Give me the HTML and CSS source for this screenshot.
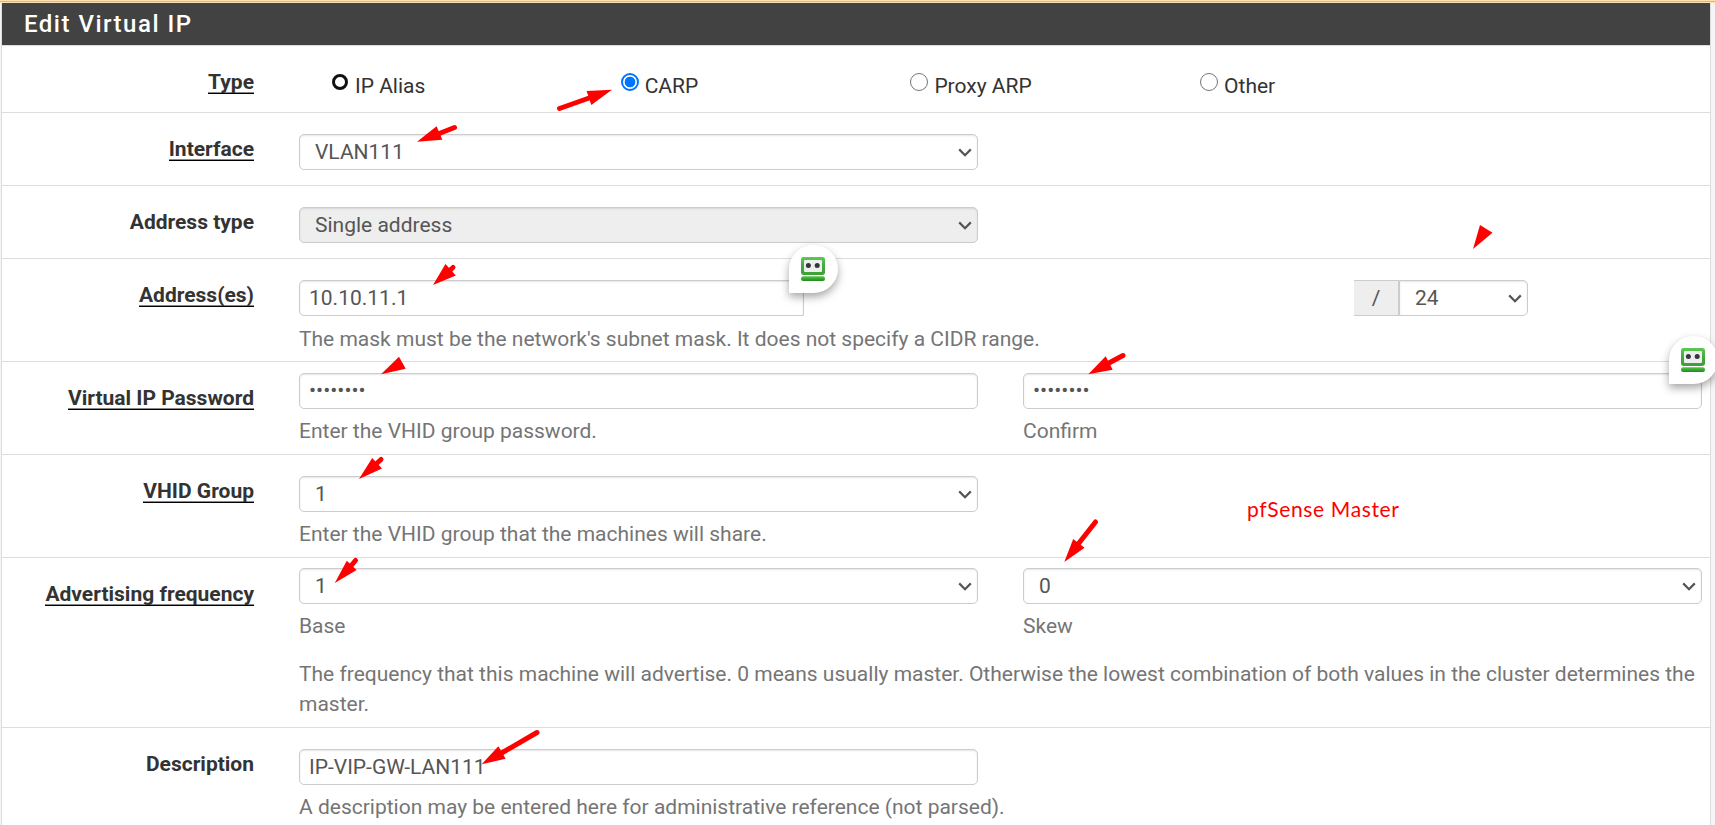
FILE: index.html
```html
<!DOCTYPE html>
<html lang="en">
<head>
<meta charset="utf-8">
<title>Edit Virtual IP</title>
<link rel="stylesheet" href="styles.css">
</head>
<body>
<svg class="defs" width="0" height="0">
  <defs>
    <linearGradient id="green" x1="0" y1="0" x2="0" y2="1"><stop offset="0" stop-color="#5bcb52"/><stop offset=".5" stop-color="#45a83e"/><stop offset="1" stop-color="#3f9f38"/></linearGradient>
    <linearGradient id="green-bar" x1="0" y1="0" x2="0" y2="1"><stop offset="0" stop-color="#55c44c"/><stop offset="1" stop-color="#1f8a19"/></linearGradient>
    <symbol id="robot" viewBox="0 0 24 24">
      <rect width="24" height="18" rx="2.4" fill="url(#green)"/>
      <rect x="3" y="3" width="18" height="12" rx="1" fill="#eee"/>
      <circle cx="7.4" cy="8.6" r="2.5" fill="#33383c"/>
      <circle cx="16.2" cy="8.6" r="2.5" fill="#33383c"/>
      <rect y="19.3" width="24" height="4.7" rx="2.2" fill="url(#green-bar)"/>
    </symbol>
    <symbol id="chevron" viewBox="0 0 14 9"><path d="M1.200 1.400L7 7.200l5.800-5.800" fill="none" stroke="#555" stroke-width="2.200"/></symbol>
  </defs>
</svg>
<div class="strip"></div>
<div class="panel">
  <h2 class="heading">Edit Virtual IP</h2>

  <div class="row row-type">
    <div class="label"><span class="required">Type</span></div>
    <div class="radios">
      <label class="radio"><i class="dot dot-bold"></i><span>IP Alias</span></label>
      <label class="radio"><i class="dot dot-on"></i><span>CARP</span></label>
      <label class="radio"><i class="dot"></i><span>Proxy ARP</span></label>
      <label class="radio"><i class="dot"></i><span>Other</span></label>
    </div>
  </div>

  <div class="row row-plain">
    <div class="label"><span class="required">Interface</span></div>
    <div class="fields"><div class="field"><div class="control select">VLAN111<svg class="chev"><use href="#chevron"/></svg></div></div></div>
  </div>

  <div class="row row-plain">
    <div class="label"><span>Address type</span></div>
    <div class="fields"><div class="field"><div class="control select disabled">Single address<svg class="chev"><use href="#chevron"/></svg></div></div></div>
  </div>

  <div class="row row-help">
    <div class="label"><span class="required">Address(es)</span></div>
    <div class="body">
      <div class="address">
        <div class="control input address-input">10.10.11.1</div>
        <div class="mask"><div class="addon">/</div><div class="control select mask-select">24<svg class="chev"><use href="#chevron"/></svg></div></div>
      </div>
      <p class="help help-low">The mask must be the network's subnet mask. It does not specify a CIDR range.</p>
    </div>
  </div>

  <div class="row row-pass">
    <div class="label"><span class="required">Virtual IP Password</span></div>
    <div class="fields">
      <div class="field"><div class="control input secret">••••••••</div><p class="help">Enter the VHID group password.</p></div>
      <div class="field"><div class="control input secret">••••••••</div><p class="help">Confirm</p></div>
    </div>
  </div>

  <div class="row row-help">
    <div class="label"><span class="required">VHID Group</span></div>
    <div class="fields"><div class="field"><div class="control select">1<svg class="chev"><use href="#chevron"/></svg></div><p class="help">Enter the VHID group that the machines will share.</p></div></div>
  </div>

  <div class="row row-freq">
    <div class="label"><span class="required">Advertising frequency</span></div>
    <div class="body">
      <div class="fields">
        <div class="field"><div class="control select">1<svg class="chev"><use href="#chevron"/></svg></div><p class="help">Base</p></div>
        <div class="field"><div class="control select">0<svg class="chev"><use href="#chevron"/></svg></div><p class="help">Skew</p></div>
      </div>
      <p class="help help-long">The frequency that this machine will advertise. 0 means usually master. Otherwise the lowest combination of both values in the cluster determines the master.</p>
    </div>
  </div>

  <div class="row row-last">
    <div class="label"><span>Description</span></div>
    <div class="fields"><div class="field"><div class="control input">IP-VIP-GW-LAN111</div><p class="help">A description may be entered here for administrative reference (not parsed).</p></div></div>
  </div>
</div>

<div class="badge badge-address"><svg width="24" height="24"><use href="#robot"/></svg></div>
<div class="badge badge-confirm"><svg width="24" height="24"><use href="#robot"/></svg></div>

<svg class="marks" viewBox="0 0 1715 825">
  <g stroke="#f00" stroke-width="5" stroke-linecap="round">
    <path d="M559.500 108.500L592 97"/>
    <path d="M454.500 127.500L438 134"/>
    <path d="M453 267.500L448 272"/>
    <path d="M1123 355.500L1107 364"/>
    <path d="M381 459.500L375 465"/>
    <path d="M355.500 560.500L350 567"/>
    <path d="M1095.500 522L1077 545.500"/>
    <path d="M537 732.500L500 754"/>
  </g>
  <g fill="#f00">
    <path d="M612 89.700L586.600 91L591.300 105z"/>
    <path d="M417 141.700L436.600 126.300L442.400 139.700z"/>
    <path d="M433 285L445.500 264L455.800 275.500z"/>
    <path d="M1473 249L1480 225L1492.500 232.700z"/>
    <path d="M381 374.300L399 356.700L405.700 368.700z"/>
    <path d="M1088.300 374.300L1105.700 356.300L1112.700 369.700z"/>
    <path d="M359 479L372.200 458L382 468.500z"/>
    <path d="M334.800 583L346.800 560.700L356.600 570z"/>
    <path d="M1064.300 562L1073.200 539L1084.600 547.700z"/>
    <path d="M481.600 764.300L498.400 746.300L505.600 758.700z"/>
  </g>
</svg>
<div class="note">pfSense Master</div>
</body>
</html>
```
FILE: styles.css
```css
* { box-sizing: border-box; }

body {
  margin: 0;
  height: 825px;
  overflow: hidden;
  position: relative;
  background: #f5f5f5;
  color: #333;
  font: 21px/30px Roboto, sans-serif;
}

.defs { position: absolute; }

.strip {
  height: 3px;
  background: linear-gradient(#ffe0b2 0 1px, #d9b48c 1px 2px, #ffe0b2 2px 3px);
}

.panel {
  width: 1710px;
  height: 822px;
  overflow: hidden;
  margin-left: 1px;
  border: solid #ddd;
  border-width: 0 1px;
  background: #fff;
}

.heading {
  margin: 0;
  height: 42px;
  padding: 4px 22px;
  background: #424242;
  color: #fff;
  font-size: 24px;
  font-weight: 500;
  line-height: 34px;
  letter-spacing: 1.5px;
}

.row {
  display: flex;
  gap: 45px;
  border-top: 1px solid #ddd;
}
.row-type { height: 67px; }
.row-plain { height: 73px; padding-top: 21px; }
.row-help { height: 103px; padding-top: 21px; }
.row-pass { height: 93px; padding-top: 11px; }
.row-freq { height: 170px; padding-top: 10px; }
.row-last { height: 110px; padding-top: 21px; }

.label {
  width: 252px;
  flex: none;
  text-align: right;
  font-weight: 700;
}
.row-type .label { padding-top: 21px; }
.row-pass .label { padding-top: 10px; }
.row-freq .label { padding-top: 11px; }

.required {
  display: inline-block;
  line-height: 22px;
  border-bottom: 1px solid #000;
  box-shadow: inset 0 -1px #888;
}

.radios { display: flex; padding: 25px 0 0 32px; }
.radio { display: flex; gap: 6px; width: 289.7px; height: 30px; }
.dot {
  width: 18px;
  height: 18px;
  margin-top: 2px;
  border: 1.5px solid #767676;
  border-radius: 50%;
}
.dot-bold { width: 16px; height: 16px; margin: 3px 1px 0; border: 3px solid #111; }
.dot-on {
  border: 2px solid #0075ff;
  background: radial-gradient(circle, #0075ff 5px, #fff 5.7px);
}

.body { width: 1403px; }
.fields { display: flex; gap: 45px; width: 1403px; }
.field { width: 679px; }

.control {
  position: relative;
  height: 36px;
  border: 1px solid #ccc;
  border-radius: 5px;
  background: #fff;
  box-shadow: inset 0 1px 2px rgba(0, 0, 0, .1);
  color: #555;
  line-height: 35px;
  white-space: nowrap;
}
.select { padding-left: 15px; }
.input { padding-left: 9px; }
.disabled { background: #eee; }
.secret { line-height: 32px; }
.chev {
  position: absolute;
  right: 5px;
  top: 13px;
  width: 14px;
  height: 9px;
}

.address { display: flex; gap: 550px; }
.address-input { width: 505px; border-radius: 5px 0 0 5px; }
.mask { display: flex; }
.addon {
  width: 45px;
  height: 36px;
  border: 1px solid #ccc;
  border-left: 0;
  background: #eee;
  color: #555;
  text-align: center;
  line-height: 35px;
}
.mask-select { width: 129px; border-radius: 0 5px 5px 0; }

.help { margin: 7px 0 0; color: #757575; white-space: nowrap; }
.help-low { margin-top: 8px; }
.help-long { margin-top: 18px; white-space: normal; }

.badge {
  position: absolute;
  width: 49px;
  height: 48px;
  padding: 12px 12px;
  border-radius: 50% 50% 50% 0;
  background: #fff;
  box-shadow: 0 4px 8px rgba(0, 0, 0, .35);
}
.badge svg { display: block; }
.badge-address { left: 789px; top: 245px; }
.badge-confirm { left: 1669px; top: 336px; }

.marks { position: absolute; left: 0; top: 0; width: 1715px; height: 825px; }

.note {
  position: absolute;
  left: 1247px;
  top: 494px;
  color: #f00;
  font: 21px/30px Lato, sans-serif;
  letter-spacing: .65px;
  white-space: nowrap;
}
```
